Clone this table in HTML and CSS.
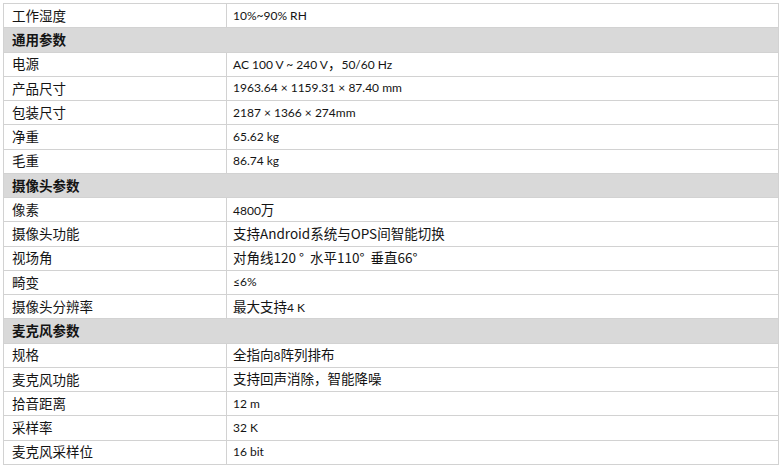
FILE: index.html
```html
<!DOCTYPE html>
<html lang="zh-CN">
<head>
<meta charset="utf-8">
<title>规格参数</title>
<link rel="stylesheet" href="styles.css">
</head>
<body>
<table class="spec">
  <colgroup><col class="c1"><col class="c2"></colgroup>
  <tbody>
    <tr><td class="k">工作湿度</td><td class="v">10%~90% RH</td></tr>
    <tr class="sec"><td colspan="2">通用参数</td></tr>
    <tr><td class="k">电源</td><td class="v">AC 100 V ~ 240 V<span class="zh">，</span>50/60 Hz</td></tr>
    <tr><td class="k">产品尺寸</td><td class="v">1963.64 × 1159.31 × 87.40 mm</td></tr>
    <tr><td class="k">包装尺寸</td><td class="v">2187 × 1366 × 274mm</td></tr>
    <tr><td class="k">净重</td><td class="v">65.62 kg</td></tr>
    <tr><td class="k">毛重</td><td class="v">86.74 kg</td></tr>
    <tr class="sec"><td colspan="2">摄像头参数</td></tr>
    <tr><td class="k">像素</td><td class="v">4800<span class="zh">万</span></td></tr>
    <tr><td class="k">摄像头功能</td><td class="v"><span class="zh">支持Android系统与OPS间智能切换</span></td></tr>
    <tr><td class="k">视场角</td><td class="v"><span class="zh">对角线120 °&nbsp;&nbsp;水平110°&nbsp;&nbsp;垂直66°</span></td></tr>
    <tr><td class="k">畸变</td><td class="v">≤6%</td></tr>
    <tr><td class="k">摄像头分辨率</td><td class="v"><span class="zh">最大支持</span>4 K</td></tr>
    <tr class="sec"><td colspan="2">麦克风参数</td></tr>
    <tr><td class="k">规格</td><td class="v"><span class="zh">全指向</span>8<span class="zh">阵列排布</span></td></tr>
    <tr><td class="k">麦克风功能</td><td class="v"><span class="zh">支持回声消除，智能降噪</span></td></tr>
    <tr><td class="k">拾音距离</td><td class="v">12 m</td></tr>
    <tr><td class="k">采样率</td><td class="v">32 K</td></tr>
    <tr><td class="k">麦克风采样位</td><td class="v">16 bit</td></tr>
  </tbody>
</table>
</body>
</html>
```
FILE: styles.css
```css
html, body {
  margin: 0;
  padding: 0;
  background: #ffffff;
}

body {
  padding: 3px 0 0 3px;
  color: #141414;
  font-family: "Noto Sans CJK SC", "Noto Sans", sans-serif;
}

.spec {
  border-collapse: collapse;
  width: 776px;
  table-layout: fixed;
}

.spec .c1 { width: 223px; }

.spec td {
  border: 1px solid #d2d2d2;
  height: 23.26px;
  padding: 0 0 0 8px;
  vertical-align: middle;
  line-height: 1;
  white-space: nowrap;
}

.k {
  font-size: 13.5px;
}

.v {
  font-family: "Lato", "Noto Sans CJK SC", sans-serif;
  font-size: 12px;
  padding-left: 6px !important;
}

.zh {
  font-family: "Noto Sans CJK SC", sans-serif;
  font-size: 13.5px;
}

.sec td {
  background: #d9d9d9;
  font-weight: 700;
  font-size: 13.5px;
}
```
